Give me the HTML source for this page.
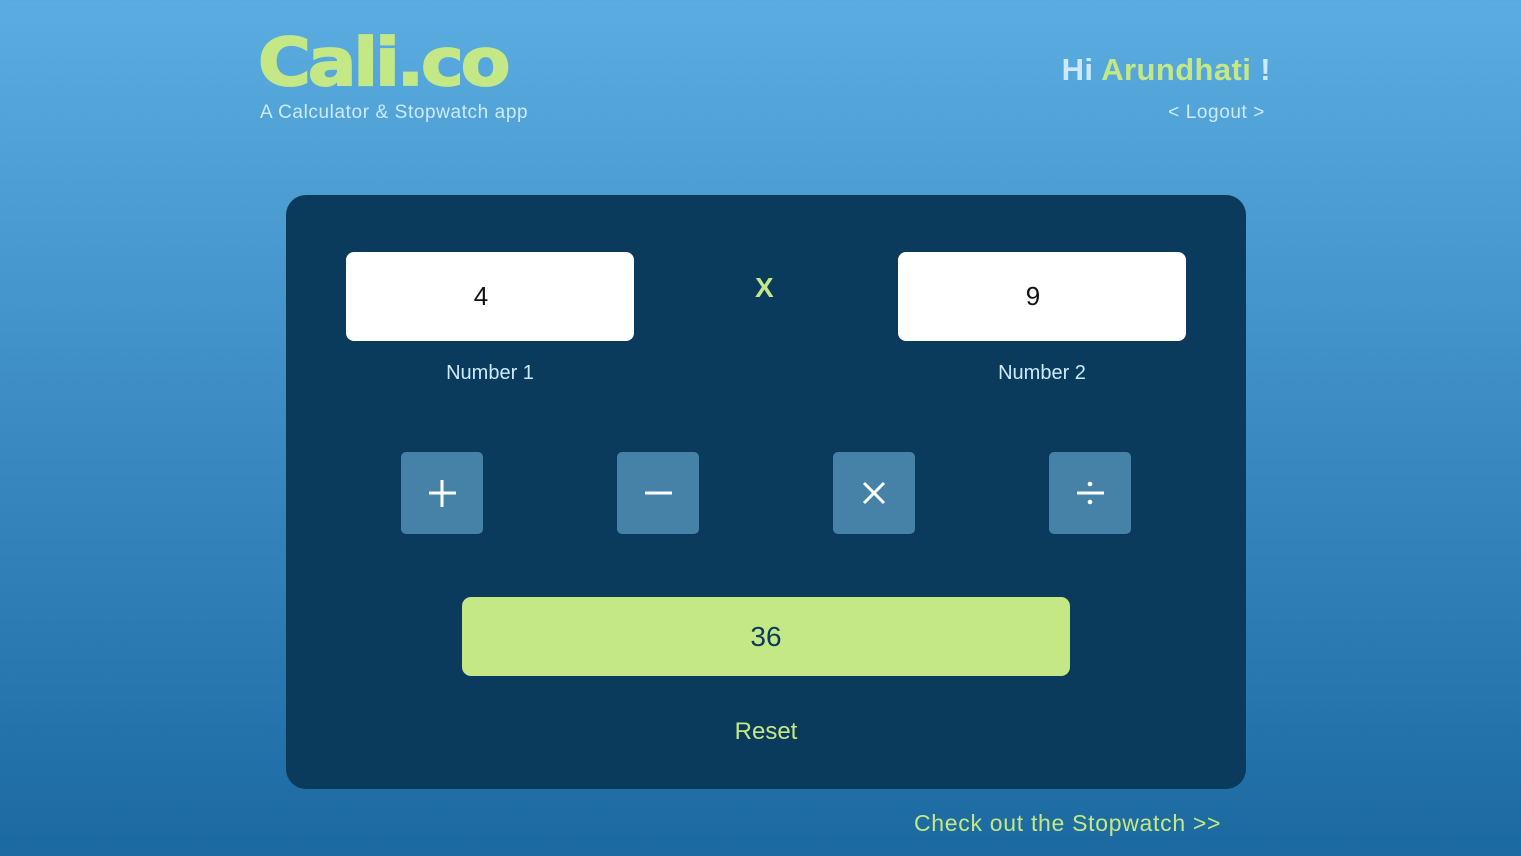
<!DOCTYPE html>
<html><head><style>
*{margin:0;padding:0;box-sizing:border-box}
body{width:1521px;height:856px;overflow:hidden;background:linear-gradient(#5badE1,#1b69a0);font-family:"Liberation Sans",sans-serif;position:relative}
.abs{position:absolute}
.logo{left:258px;top:22px;font-size:72px;font-weight:900;color:#c4e886;letter-spacing:-3px;font-family:"DejaVu Sans","Liberation Sans",sans-serif;transform:scaleY(0.92);line-height:80px;-webkit-text-stroke:2px #c4e886}
.sub{left:260px;top:102px;font-size:19px;color:#cdeafc;letter-spacing:0.6px}
.hi{right:250px;top:52px;font-size:31px;font-weight:bold;color:#cdeafc;letter-spacing:0.4px}
.hi span{color:#c4e886}
.lo{right:256px;top:102px;font-size:19px;color:#cdeafc;letter-spacing:0.6px}
.panel{left:286px;top:195px;width:960px;height:594px;background:#0a3b5c;border-radius:20px}
.inp{width:288px;height:89px;background:#fff;border-radius:8px;top:252px;font-size:26px;text-align:center;line-height:89px;color:#111;padding-right:18px}
.lbl{top:362px;font-size:20px;color:#cdeafc;width:288px;text-align:center}
.op{top:452px;width:82px;height:82px;background:#4682a8;border-radius:5px}
.res{left:462px;top:597px;width:608px;height:79px;background:#c4e886;border-radius:9px;text-align:center;line-height:79px;font-size:28px;color:#0a3b5c}
</style></head><body>
<div class="abs logo">Cali.co</div>
<div class="abs sub">A Calculator &amp; Stopwatch app</div>
<div class="abs hi">Hi <span>Arundhati</span> !</div>
<div class="abs lo">&lt; Logout &gt;</div>
<div class="abs panel"></div>
<div class="abs inp" style="left:346px">4</div>
<div class="abs inp" style="left:898px">9</div>
<div class="abs" style="left:755px;top:272px;font-size:28px;font-weight:bold;color:#c4e886">X</div>
<div class="abs lbl" style="left:346px">Number 1</div>
<div class="abs lbl" style="left:898px">Number 2</div>
<div class="abs op" style="left:401px"><svg width="82" height="82"><path d="M41 28V55M28 41H55" stroke="#fff" stroke-width="3"/></svg></div>
<div class="abs op" style="left:617px"><svg width="82" height="82"><path d="M28 41H55" stroke="#fff" stroke-width="3"/></svg></div>
<div class="abs op" style="left:833px"><svg width="82" height="82"><path d="M31 31L51 51M51 31L31 51" stroke="#fff" stroke-width="3"/></svg></div>
<div class="abs op" style="left:1049px"><svg width="82" height="82"><path d="M28 41H55" stroke="#fff" stroke-width="3"/><circle cx="41" cy="32" r="2.3" fill="#fff"/><circle cx="41" cy="50" r="2.3" fill="#fff"/></svg></div>
<div class="abs res">36</div>
<div class="abs" style="left:0;width:1532px;text-align:center;top:718px;font-size:24px;color:#c4e886">Reset</div>
<div class="abs" style="left:914px;top:810px;font-size:23px;color:#c4e886;letter-spacing:0.7px">Check out the Stopwatch &gt;&gt;</div>
</body></html>
